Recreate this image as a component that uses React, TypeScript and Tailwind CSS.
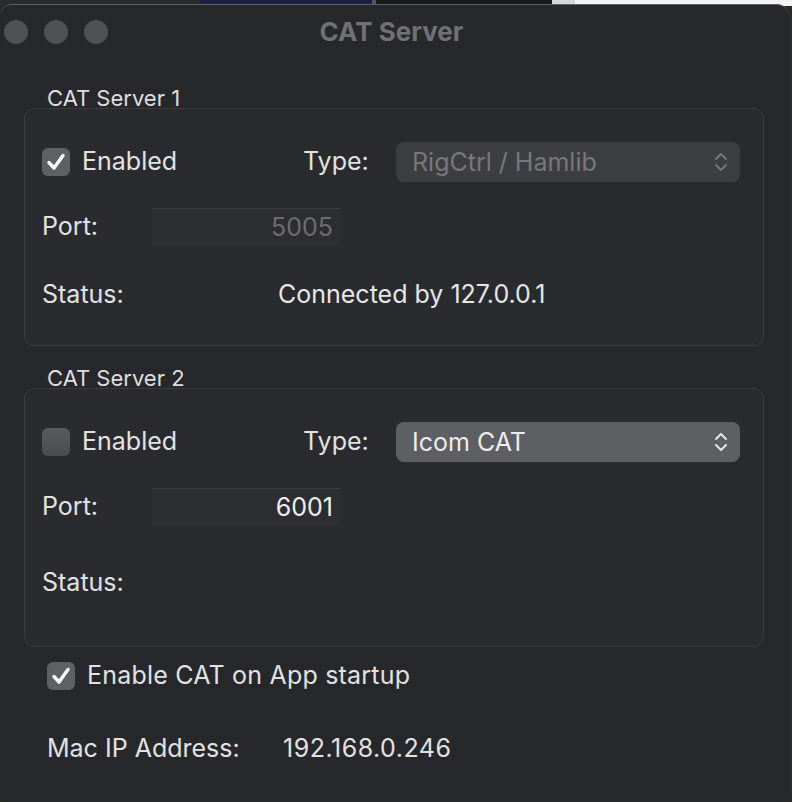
import React from "react";

const font = { fontFamily: "Inter, 'Noto Sans', sans-serif" };

function Checkbox({ checked }: { checked: boolean }) {
  return (
    <div
      className={
        "w-[28px] h-[28px] rounded-[6px] flex items-center justify-center shrink-0 " +
        (checked ? "bg-[#5f6064]" : "bg-gradient-to-b from-[#5a5b5f] to-[#4b4c50]")
      }
    >
      {checked && (
        <svg width="22" height="22" viewBox="0 0 22 22" fill="none">
          <path d="M4 11.5 L9 17 L18 4.5" stroke="#ffffff" strokeWidth="3.4" strokeLinecap="round" strokeLinejoin="round" />
        </svg>
      )}
    </div>
  );
}

function Chevrons({ color }: { color: string }) {
  return (
    <svg width="14" height="22" viewBox="0 0 14 22" fill="none">
      <path d="M2 8 L7 3 L12 8" stroke={color} strokeWidth="2" strokeLinecap="round" strokeLinejoin="round" />
      <path d="M2 14 L7 19 L12 14" stroke={color} strokeWidth="2" strokeLinecap="round" strokeLinejoin="round" />
    </svg>
  );
}

function Popup({ value, disabled }: { value: string; disabled?: boolean }) {
  return (
    <div
      className={
        "w-[344px] h-[40px] rounded-[8px] flex items-center justify-between pl-[16px] pr-[12px] " +
        (disabled ? "bg-[#3d3e42] text-[#77787c]" : "bg-[#5e5f63] text-[#ececec]")
      }
    >
      <span className="text-[25px] leading-none">{value}</span>
      <Chevrons color={disabled ? "#77787c" : "#e6e6e6"} />
    </div>
  );
}

function PortField({ value, disabled }: { value: string; disabled?: boolean }) {
  return (
    <div
      className={
        "w-[188px] h-[38px] bg-[#2d2e32] border-t border-[#3e3f43] flex items-center justify-end pr-[7px] text-[25px] " +
        (disabled ? "text-[#6c6d71]" : "text-[#eeeeee]")
      }
    >
      {value}
    </div>
  );
}

function ServerGroup({
  title,
  enabled,
  type,
  port,
  status,
  statusGap,
  bottomPad,
}: {
  title: string;
  enabled: boolean;
  type: string;
  port: string;
  status: string;
  statusGap: string;
  bottomPad: string;
}) {
  return (
    <div>
      <div className="pl-[47px] h-[20px] leading-[20px] text-[22px] text-[#dedede]">{title}</div>
      <div
        className={
          "mx-[24px] w-[740px] rounded-[10px] border border-[#3b3c40] bg-[#2a2b2f] pl-[17px] pt-[33px] " + bottomPad
        }
      >
        <div className="flex items-center h-[40px]">
          <div className="w-[261px] flex items-center gap-[12px]">
            <Checkbox checked={enabled} />
            <span className="text-[25px] text-[#e2e2e2]">Enabled</span>
          </div>
          <span className="w-[93px] text-[25px] text-[#e2e2e2]">Type:</span>
          <Popup value={type} disabled={enabled} />
        </div>
        <div className="flex items-center h-[38px] mt-[26px]">
          <span className="w-[110px] text-[25px] text-[#e2e2e2]">Port:</span>
          <PortField value={port} disabled={enabled} />
        </div>
        <div className={"flex items-center h-[38px] " + statusGap}>
          <span className="w-[236px] text-[25px] text-[#e2e2e2]">Status:</span>
          <span className="text-[25px] text-[#e6e6e6]">{status}</span>
        </div>
      </div>
    </div>
  );
}

export default function App() {
  return (
    <div className="w-[792px] h-[802px] relative overflow-hidden bg-[#2a2a2a]" style={font}>
      {/* desktop strip behind the window */}
      <div className="flex h-[6px]">
        <div className="w-[200px] bg-[#2b2b2b]" />
        <div className="w-[172px] bg-[#1b2143]" />
        <div className="w-[4px] bg-[#555555]" />
        <div className="w-[176px] bg-[#1a1a1a]" />
        <div className="w-[23px] bg-[#d6d6d6]" />
        <div className="flex-1 bg-[#f4f4f4]" />
      </div>

      <div className="absolute left-0 top-[4px] w-[789px] h-[798px] rounded-[12px] bg-[#27282c] border-t border-[#5c5d61]">
        {/* title bar */}
        <div className="h-[55px] relative flex items-center justify-center">
          <div className="absolute left-[4px] top-[15px] flex gap-[16px]">
            <div className="w-[24px] h-[24px] rounded-full bg-[#505155]" />
            <div className="w-[24px] h-[24px] rounded-full bg-[#505155]" />
            <div className="w-[24px] h-[24px] rounded-full bg-[#505155]" />
          </div>
          <span className="text-[26px] font-bold text-[#707175] pr-[6px] pb-[3px]">CAT Server</span>
        </div>

        <div className="pt-[28px]">
          <ServerGroup
            title="CAT Server 1"
            enabled={true}
            type="RigCtrl / Hamlib"
            port="5005"
            status="Connected by 127.0.0.1"
            statusGap="mt-[30px]"
            bottomPad="pb-[31px]"
          />
          <div className="h-[22px]" />
          <ServerGroup
            title="CAT Server 2"
            enabled={false}
            type="Icom CAT"
            port="6001"
            status=""
            statusGap="mt-[38px]"
            bottomPad="pb-[44px]"
          />

          <div className="flex items-center gap-[12px] pl-[47px] mt-[15px] h-[28px]">
            <Checkbox checked={true} />
            <span className="text-[25px] tracking-[0.2px] text-[#e2e2e2]">Enable CAT on App startup</span>
          </div>

          <div className="flex items-center pl-[47px] mt-[47px] h-[24px] text-[25px] text-[#e2e2e2]">
            <span className="w-[236px]">Mac IP Address:</span>
            <span className="tracking-[0.5px]">192.168.0.246</span>
          </div>
        </div>
      </div>
    </div>
  );
}
